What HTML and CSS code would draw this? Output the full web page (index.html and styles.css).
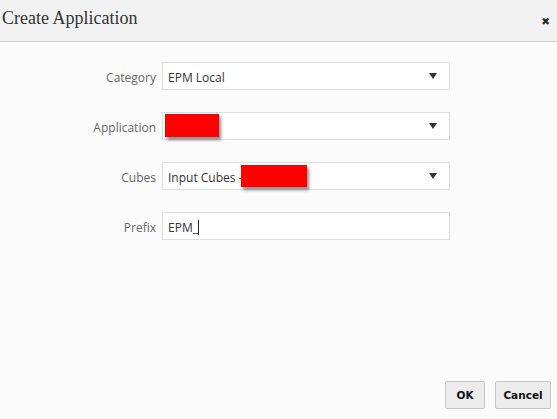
FILE: index.html
```html
<!DOCTYPE html>
<html>
<head>
<meta charset="utf-8">
<link rel="stylesheet" href="styles.css">
</head>
<body>
<div class="dialog">
  <div class="header">
    <div class="title">Create Application</div>
    <div class="close">&#x2716;</div>
  </div>
  <div class="form">
    <label class="lbl">Category</label>
    <div class="field select"><span class="val">EPM Local</span><span class="arrow"></span></div>

    <label class="lbl">Application</label>
    <div class="field select"><span class="val"></span><span class="redact r1"></span><span class="arrow"></span></div>

    <label class="lbl">Cubes</label>
    <div class="field select"><span class="val">Input Cubes -</span><span class="redact r2"></span><span class="arrow"></span></div>

    <label class="lbl">Prefix</label>
    <div class="field"><span class="val">EPM_</span><span class="caret"></span></div>
  </div>
  <div class="footer">
    <button class="btn ok">OK</button>
    <button class="btn cancel">Cancel</button>
  </div>
</div>
</body>
</html>
```
FILE: styles.css
```css
html, body {
  margin: 0;
  padding: 0;
}
body {
  background: #fbfbfb;
  width: 557px;
  height: 419px;
  overflow: hidden;
}
.dialog {
  display: flex;
  flex-direction: column;
  height: 419px;
}
.header {
  height: 41px;
  background: #f2f2f2;
  border-bottom: 1px solid #cfcfcf;
  display: flex;
  align-items: center;
  justify-content: space-between;
  padding: 0 7px 0 2px;
  box-sizing: content-box;
}
.title {
  font-family: "Liberation Serif", serif;
  font-size: 18px;
  color: #333;
  margin-top: -5px;
}
.close {
  font-family: "DejaVu Sans", sans-serif;
  font-size: 10.5px;
  color: #2a2a2a;
  margin-top: 1px;
}
.form {
  display: grid;
  grid-template-columns: 156px 288px;
  column-gap: 6px;
  row-gap: 22px;
  padding-top: 20px;
  align-items: center;
}
.lbl {
  text-align: right;
  font-family: "Open Sans", sans-serif;
  font-size: 12px;
  color: #666;
  padding-top: 2px;
}
.field {
  position: relative;
  height: 28px;
  box-sizing: border-box;
  border: 1px solid #dedede;
  background: #fff;
  display: flex;
  align-items: center;
  padding-left: 5px;
  padding-top: 2px;
  font-family: "Open Sans", sans-serif;
  font-size: 12px;
  color: #333;
}
.field .val {
  flex: none;
}
.arrow {
  margin-left: auto;
  margin-right: 12px;
  margin-top: -2px;
  width: 0;
  height: 0;
  border-left: 4px solid transparent;
  border-right: 4px solid transparent;
  border-top: 6px solid #333;
}
.caret {
  display: inline-block;
  width: 1px;
  height: 15px;
  background: #222;
}
.redact {
  position: absolute;
  background: #ff0000;
  box-shadow: 2px 3px 3px rgba(0,0,0,0.45);
}
.r1 {
  left: 2px;
  top: 1px;
  width: 54px;
  height: 23px;
}
.r2 {
  left: 78px;
  top: 2px;
  width: 66px;
  height: 22px;
}
.footer {
  margin-top: auto;
  display: flex;
  justify-content: flex-end;
  gap: 10px;
  padding: 0 6px 10px 0;
}
.btn {
  height: 28px;
  box-sizing: border-box;
  border: 1px solid #c6c6c6;
  border-radius: 2px;
  background: #ececec;
  font-family: "DejaVu Sans", sans-serif;
  font-weight: bold;
  font-size: 10.5px;
  color: #111;
  padding: 0;
}
.ok { width: 40px; }
.cancel { width: 56px; }
```
